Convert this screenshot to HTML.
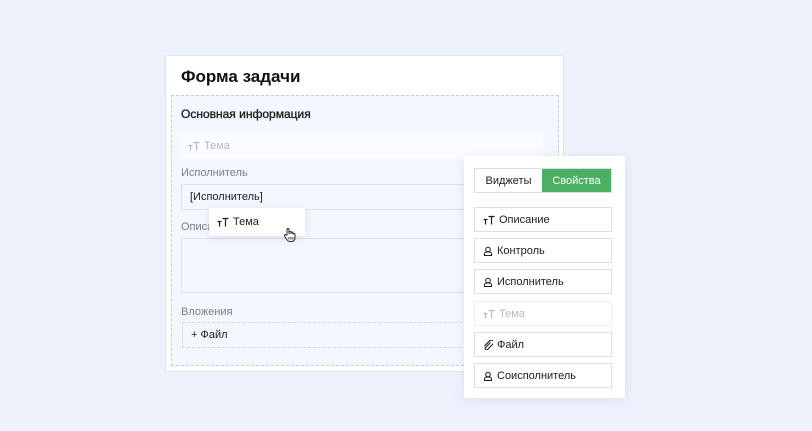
<!DOCTYPE html><html><head><meta charset="utf-8"><style>
*{box-sizing:border-box;margin:0;padding:0}
body{width:812px;height:431px;background:#edf2fd;font-family:"Liberation Sans",sans-serif;position:relative;overflow:hidden;color:#1d1d1f}
.a{position:absolute}
.card{left:165px;top:55px;width:399px;height:317px;background:#fff;border:1px solid #dfe3ea}
.title{left:181px;top:67px;font-size:17px;font-weight:bold;color:#111}
.sec{left:171px;top:95px;width:388px;height:271px;background:#f3f7fe;border:1px dashed #c9ccd2}
.lbl{font-size:11px;color:#7a7d83}
.inp{background:#f3f7fe;border:1px solid #dde1e7;font-size:11px;padding-left:8px;display:flex;align-items:center}
.panel{left:464px;top:156px;width:161px;height:242px;background:#fff;box-shadow:0 2px 12px rgba(60,80,120,.12)}
.it{left:474px;width:138px;height:25px;border:1px solid #dcdfe4;background:#fff;font-size:11px;display:flex;align-items:center;padding-left:8px;gap:4px}
svg{flex:none}
</style></head><body>
<svg width="0" height="0" style="position:absolute"><defs>
<g id="tt" fill="none" stroke="currentColor" stroke-width="1.2"><path d="M0.5 4.5h4M2.5 4.5v5M5.5 1.5h6M8.5 1.5v8"/></g>
<g id="pp" fill="none" stroke="currentColor" stroke-width="1"><circle cx="5" cy="3.5" r="2.3"/><path d="M1.5 9.5v-1.5c0-1 1-2 2-2h3c1 0 2 1 2 2v1.5z"/></g>
<g id="cl" fill="none" stroke="currentColor" stroke-width="1.1"><path d="M7.5 2.5l-5 5a1.4 1.4 0 0 0 2 2l5.5-5.5a2.3 2.3 0 0 0-3.3-3.3L1.5 6"/></g>
</defs></svg>
<div class="a card"></div>
<div class="a title">Форма задачи</div>
<div class="a sec"></div>
<div class="a" style="left:181px;top:107px;font-size:12px;color:#222;-webkit-text-stroke:0.35px #222">Основная информация</div>
<div class="a" style="left:179px;top:133px;width:364px;height:26px;background:#fafcff;border-radius:2px;font-size:11px;color:#b6b8bc;display:flex;align-items:center;padding-left:9px;gap:4px"><svg width="12" height="10"><use href="#tt"/></svg>Тема</div>
<div class="a lbl" style="left:181px;top:167px">Исполнитель</div>
<div class="a inp" style="left:181px;top:184px;width:290px;height:26px">[Исполнитель]</div>
<div class="a lbl" style="left:181px;top:221px">Описание</div>
<div class="a inp" style="left:181px;top:238px;width:290px;height:55px"></div>
<div class="a lbl" style="left:181px;top:306px">Вложения</div>
<div class="a" style="left:182px;top:322px;width:290px;height:26px;border:1px dashed #d4d7dc;font-size:11px;display:flex;align-items:center;padding-left:8px">+ Файл</div>
<div class="a" style="left:209px;top:208px;width:96px;height:28px;background:#fff;box-shadow:0 2px 8px rgba(60,80,120,.15);font-size:11px;display:flex;align-items:center;padding-left:8px;gap:4px"><svg width="12" height="10"><use href="#tt"/></svg>Тема</div>
<svg class="a" style="left:283px;top:227px" width="14" height="15" viewBox="0 0 14 15"><path d="M4 8V2.5a1 1 0 0 1 2 0V7V5.5a1 1 0 0 1 2 0V7V6a1 1 0 0 1 2 0v1.5a1 1 0 0 1 2 0V11c0 2-1.5 3.5-3.5 3.5H7c-1.5 0-2.5-1-3.5-2.5L1.5 9a1 1 0 0 1 1.7-1z" fill="#fff" stroke="#222" stroke-width="1"/><path d="M6 10v2.5M8 10v2.5M10 10v2.5" stroke="#222" stroke-width=".9"/></svg>
<div class="a panel"></div>
<div class="a" style="left:474px;top:168px;width:138px;height:25px;border:1px solid #dcdfe4;display:flex;font-size:11px"><div style="width:67px;display:flex;align-items:center;justify-content:center;background:#fff">Виджеты</div><div style="flex:1;background:#4caf63;color:#fff;display:flex;align-items:center;justify-content:center">Свойства</div></div>
<div class="a it" style="top:207px"><svg width="12" height="10"><use href="#tt"/></svg>Описание</div>
<div class="a it" style="top:238px"><svg width="10" height="10"><use href="#pp"/></svg>Контроль</div>
<div class="a it" style="top:269px"><svg width="10" height="10"><use href="#pp"/></svg>Исполнитель</div>
<div class="a it" style="top:301px;border-color:#eef0f3;color:#b8babe"><svg width="12" height="10"><use href="#tt"/></svg>Тема</div>
<div class="a it" style="top:332px"><svg width="10" height="10"><use href="#cl"/></svg>Файл</div>
<div class="a it" style="top:363px"><svg width="10" height="10"><use href="#pp"/></svg>Соисполнитель</div>
</body></html>
